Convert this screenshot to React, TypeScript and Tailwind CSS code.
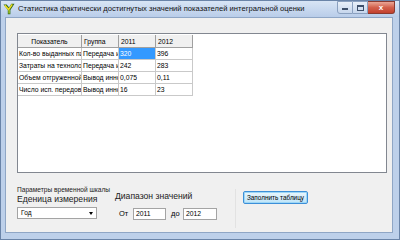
import React from "react";

const rows = [
  ["Кол-во выданных патентов", "Передача и распространение", "320", "396"],
  ["Затраты на технологические инновации", "Передача и распространение", "242", "283"],
  ["Объем отгруженной продукции", "Вывод инноваций", "0,075", "0,11"],
  ["Число исп. передовых технологий", "Вывод инноваций", "16", "23"],
];

function Icon() {
  return (
    <svg width="12" height="12" viewBox="0 0 12 12">
      <path d="M0.5 1.5 L4.8 7 L4.8 11.2 L7.4 11.2 L7.4 7 L11.5 0.8 L8.3 0.8 L6.1 4.6 L3.7 1.5 Z" fill="#2f6b18" />
      <path d="M1.8 2.2 L5.6 6.6 L9.2 1.4" stroke="#f0dc22" strokeWidth="1.6" fill="none" strokeLinejoin="round" />
      <path d="M6.1 7 L6.1 10.6" stroke="#c4d62a" strokeWidth="1.2" />
    </svg>
  );
}

export default function App() {
  return (
    <div
      className="w-[400px] h-[240px] flex flex-col overflow-hidden border border-[#6a84a8] bg-[#bdd0ea] text-black"
      style={{ fontFamily: '"Liberation Sans", Arial, sans-serif' }}
    >
      {/* title bar */}
      <div className="h-[16px] flex items-start bg-gradient-to-b from-[#d8e5f5] to-[#b9cde9]">
        <div className="ml-[2px] mt-[2px]">
          <Icon />
        </div>
        <div className="ml-[3px] mt-[3px] text-[7.6px] leading-[10px] text-[#111] whitespace-nowrap">
          Статистика фактически достигнутых значений показателей интегральной оценки
        </div>
        <div className="ml-auto mr-[4px] flex">
          <div className="w-[16px] h-[13px] border border-[#8aa0bf] rounded-bl-[3px] bg-gradient-to-b from-[#e8eff8] to-[#c6d6ec] flex items-end justify-center pb-[3px]">
            <div className="w-[6px] h-[2px] bg-[#3d4f6a]" />
          </div>
          <div className="w-[15px] h-[13px] border-y border-r border-[#8aa0bf] bg-gradient-to-b from-[#e8eff8] to-[#c6d6ec] flex items-center justify-center">
            <div className="w-[7px] h-[6px] border border-[#3d4f6a] border-t-2" />
          </div>
          <div className="w-[27px] h-[13px] border-y border-r border-[#8a3a30] rounded-br-[3px] bg-gradient-to-b from-[#e9a696] via-[#d3604c] to-[#c2402d] flex items-center justify-center text-white text-[8px] font-bold leading-none">
            x
          </div>
        </div>
      </div>

      {/* client area */}
      <div className="flex-1 ml-[4px] mr-[6px] mb-[6px] border border-[#8fa6c5] bg-[#f0f0f0] flex flex-col">
        {/* grid */}
        <div className="ml-[11px] mr-[5px] mt-[15px] h-[140px] border border-[#828790] bg-white pt-[1px]">
          <div className="grid grid-cols-[64px_37px_37px_37px] text-[6.8px] leading-[12px]">
            {["Показатель", "Группа", "2011", "2012"].map((h, i) => (
              <div
                key={h}
                className={`h-[13px] bg-[#f0f0f0] border-r border-b border-[#a0a0a0] px-[2px] leading-[13px] overflow-hidden whitespace-nowrap ${i === 0 ? "text-center" : "text-left"}`}
              >
                {h}
              </div>
            ))}
            {rows.map((r, ri) =>
              r.map((c, ci) => {
                const sel = ri === 0 && ci === 2;
                return (
                  <div
                    key={ri + "-" + ci}
                    className={`h-[12px] border-r border-b border-[#c9c9c9] px-[1px] overflow-hidden whitespace-nowrap ${sel ? "bg-[#3399ff] text-white" : "bg-white"}`}
                  >
                    {c}
                  </div>
                );
              })
            )}
          </div>
        </div>

        {/* bottom */}
        <div className="flex items-start ml-[11px] flex-1">
          <div className="w-[98px] pt-[13px] flex flex-col">
            <div className="text-[6.6px] leading-[8px] whitespace-nowrap text-[#222]">Параметры временной шкалы</div>
            <div className="text-[8.6px] leading-[11px] whitespace-nowrap text-[#222]">Еденица измерения</div>
            <div className="mt-[2px] w-[80px] h-[12px] border border-[#a4a4a4] bg-white flex items-center text-[6.6px] pl-[3px]">
              <span>Год</span>
              <span className="ml-auto mr-[3px] w-0 h-0 border-l-[2.5px] border-r-[2.5px] border-t-[3px] border-l-transparent border-r-transparent border-t-black" />
            </div>
          </div>
          <div className="w-[120px] pt-[18px] flex flex-col">
            <div className="text-[8.6px] leading-[11px] whitespace-nowrap text-[#222]">Диапазон значений</div>
            <div className="mt-[6px] flex items-center text-[7px]">
              <span className="ml-[4px] w-[14px] text-[7.5px]">От</span>
              <div className="w-[33px] h-[12px] border border-[#a4a4a4] bg-white pl-[2px] leading-[10px] text-[6.8px]">2011</div>
              <span className="ml-[5px] w-[12px] text-[7.5px]">до</span>
              <div className="w-[34px] h-[12px] border border-[#a4a4a4] bg-white pl-[2px] leading-[10px] text-[6.8px]">2012</div>
            </div>
          </div>
          <div className="self-stretch mt-[16px] mb-[4px] w-px bg-[#e2e2e2]" />
          <div className="ml-[7px] pt-[18px]">
            <div className="w-[65px] h-[13px] rounded-[2px] border border-[#3c8fd8] bg-gradient-to-b from-[#eaf6fd] to-[#bde4f8] shadow-[inset_0_0_0_1px_#9ed7f6] flex items-center justify-center text-[6.4px] whitespace-nowrap">
              Заполнить таблицу
            </div>
          </div>
        </div>
      </div>
    </div>
  );
}
